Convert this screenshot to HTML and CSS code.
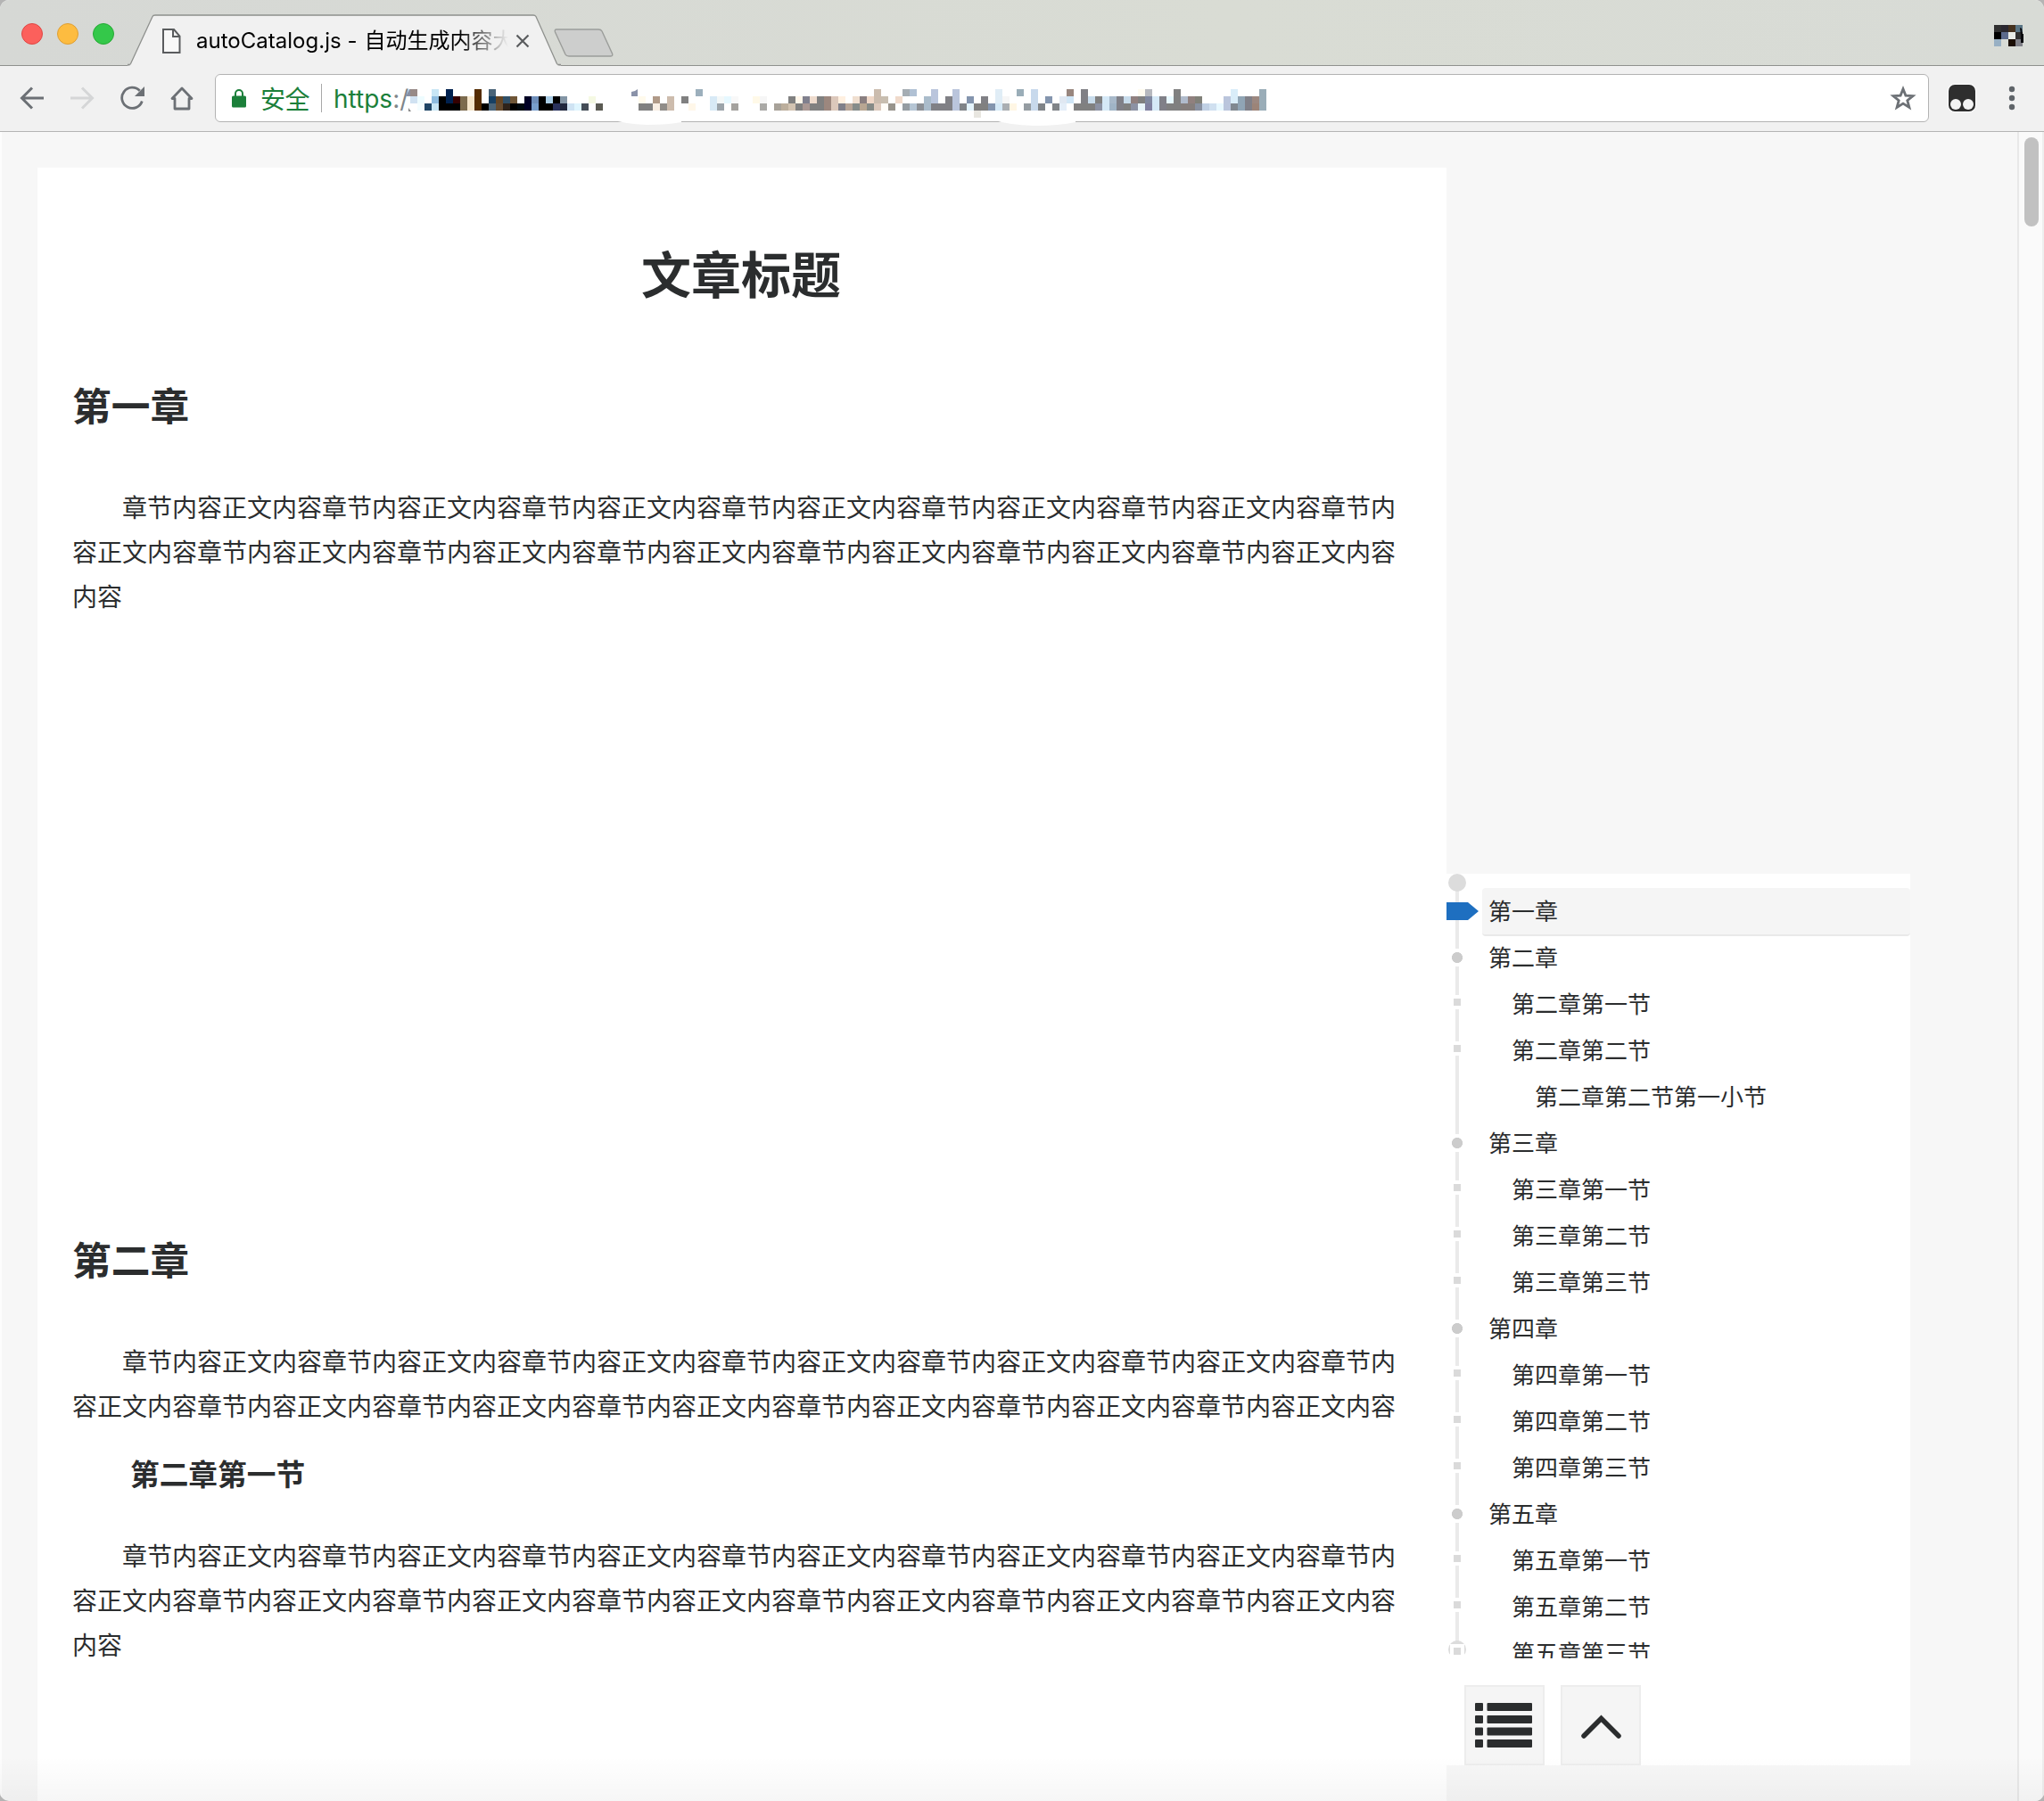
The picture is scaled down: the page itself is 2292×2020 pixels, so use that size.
FILE: index.html
```html
<!DOCTYPE html>
<html lang="zh-CN">
<head>
<meta charset="utf-8">
<title>autoCatalog.js</title>
<link rel="stylesheet" href="styles.css">
</head>
<body>
<div class="window">
  <header class="titlebar">
    <div class="lights"><i class="light red"></i><i class="light yellow"></i><i class="light green"></i></div>
    <div class="tab">
      <svg class="tab-shape" width="486" height="58" viewBox="0 0 486 58"><path d="M0 57.5H1.5Q3 57.500 3.500 56L28 3Q29 1.500 31 1.500H455Q457 1.500 458 3L481.500 56Q482 57.500 484 57.500H486V58H0Z" fill="#f1f1f1"/><path d="M0 56.500H1.500Q3 56.500 3.500 55.500L28 2.500Q28.500 1 31 1H455Q457 1 458 2.500L481.500 55.500Q482 56.500 484 56.500H486" fill="none" stroke="#8f918e" stroke-width="1.300"/></svg>
      <svg class="tab-icon" width="21" height="28" viewBox="0 0 21 28"><path d="M1 1H13L19.500 8.500V27H1ZM12 1V9H19.500" fill="#f8f8f8" stroke="#5a5c5e" stroke-width="2"/></svg>
      <span class="tab-title"><span class="latin">autoCatalog.js - </span>自动生成内容大</span>
      <svg class="tab-close" width="16" height="16" viewBox="0 0 16 16"><path d="M1.500 1.500L14.500 14.500M14.500 1.500L1.500 14.500" stroke="#5a5c5e" stroke-width="2.200"/></svg>
    </div>
    <svg class="new-tab" width="68" height="34" viewBox="0 0 68 34"><path d="M3 1H50Q53 1 54 3L65.500 28Q66.500 31 64 31H17Q14 31 13 29L1.500 4Q.5 1 3 1Z" fill="#cdcecd" stroke="#9b9d9a" stroke-width="1.400"/></svg>
    <svg class="profile" id="profile" width="33" height="24" viewBox="0 0 33 24"></svg>
  </header>

  <div class="toolbar">
    <div class="nav">
      <svg width="28" height="28" viewBox="0 0 28 28"><path d="M27 14H3M14 2.500L2.500 14L14 25.500" fill="none" stroke="#6c7075" stroke-width="3"/></svg>
      <svg width="28" height="28" viewBox="0 0 28 28"><path d="M1 14H25M14 2.500L25.500 14L14 25.500" fill="none" stroke="#d5d6d7" stroke-width="3"/></svg>
      <svg width="28" height="28" viewBox="0 0 28 28"><path d="M22.700 5.800A11.600 11.600 0 1 0 25.300 17.500" fill="none" stroke="#6c7075" stroke-width="2.800"/><path d="M28 1V12H17Z" fill="#6c7075"/></svg>
      <svg width="28" height="28" viewBox="0 0 28 28"><path d="M14 3L3 14.500H6V26H22V14.500H25Z" fill="none" stroke="#6c7075" stroke-width="2.800" stroke-linejoin="round"/></svg>
    </div>
    <div class="omnibox">
      <svg class="lock" width="18" height="22" viewBox="0 0 18 22"><path d="M5 10V6a4 4 0 0 1 8 0v4" fill="none" stroke="#1b7f3a" stroke-width="2"/><rect x="1" y="8.500" width="16" height="13" rx="1.500" fill="#1b7f3a"/></svg>
      <span class="secure">安全</span>
      <i class="divider"></i>
      <span class="scheme">https<b>:/</b></span>
      <svg class="redacted" id="redacted" width="976" height="42" viewBox="-8 0 976 42"></svg>
      <svg class="star" width="30" height="28" viewBox="0 0 30 28"><path d="M15 3.800L17.900 11.100L26 11.600L19.800 16.700L21.900 24.500L15 20.100L8.100 24.500L10.200 16.700L4 11.600L12.100 11.100Z" fill="none" stroke="#6c7075" stroke-width="2.800"/></svg>
    </div>
    <svg class="extension" width="32" height="32" viewBox="0 0 32 32"><rect width="32" height="32" rx="8" fill="#fff"/><rect x="1" y="1" width="30" height="30" rx="7" fill="#2e2e2e"/><circle cx="9" cy="23" r="6" fill="#f3f3f3"/><circle cx="23" cy="23" r="6" fill="#f3f3f3"/></svg>
    <svg class="menu" width="8" height="28" viewBox="0 0 8 28"><g fill="#5f6469"><circle cx="4" cy="4" r="3.200"/><circle cx="4" cy="14" r="3.200"/><circle cx="4" cy="24" r="3.200"/></g></svg>
  </div>

  <div class="viewport">
    <main class="article">
      <h1>文章标题</h1>
      <section class="chapter first">
        <h2>第一章</h2>
        <p>章节内容正文内容章节内容正文内容章节内容正文内容章节内容正文内容章节内容正文内容章节内容正文内容章节内容正文内容章节内容正文内容章节内容正文内容章节内容正文内容章节内容正文内容章节内容正文内容章节内容正文内容内容</p>
      </section>
      <section class="chapter">
        <h2>第二章</h2>
        <p>章节内容正文内容章节内容正文内容章节内容正文内容章节内容正文内容章节内容正文内容章节内容正文内容章节内容正文内容章节内容正文内容章节内容正文内容章节内容正文内容章节内容正文内容章节内容正文内容章节内容正文内容</p>
        <h3>第二章第一节</h3>
        <p>章节内容正文内容章节内容正文内容章节内容正文内容章节内容正文内容章节内容正文内容章节内容正文内容章节内容正文内容章节内容正文内容章节内容正文内容章节内容正文内容章节内容正文内容章节内容正文内容章节内容正文内容内容</p>
      </section>
    </main>

    <aside class="catalog">
      <div class="catalog-list">
        <div class="rail"></div>
        <ul>
          <li class="l1 active"><a>第一章</a></li>
          <li class="l1"><a>第二章</a></li>
          <li class="l2"><a>第二章第一节</a></li>
          <li class="l2"><a>第二章第二节</a></li>
          <li class="l3"><a>第二章第二节第一小节</a></li>
          <li class="l1"><a>第三章</a></li>
          <li class="l2"><a>第三章第一节</a></li>
          <li class="l2"><a>第三章第二节</a></li>
          <li class="l2"><a>第三章第三节</a></li>
          <li class="l1"><a>第四章</a></li>
          <li class="l2"><a>第四章第一节</a></li>
          <li class="l2"><a>第四章第二节</a></li>
          <li class="l2"><a>第四章第三节</a></li>
          <li class="l1"><a>第五章</a></li>
          <li class="l2"><a>第五章第一节</a></li>
          <li class="l2"><a>第五章第二节</a></li>
          <li class="l2"><a>第五章第三节</a></li>
        </ul>
      </div>
      <div class="catalog-buttons">
        <button><svg width="86" height="86" viewBox="0 0 86 86" fill="#2b2d2e"><rect x="10" y="18" width="9" height="9" rx="1"/><rect x="10" y="32" width="9" height="9" rx="1"/><rect x="10" y="45.500" width="9" height="9" rx="1"/><rect x="10" y="59" width="9" height="9" rx="1"/><rect x="23.500" y="18" width="50.500" height="9" rx="1"/><rect x="23.500" y="32" width="50.500" height="9" rx="1"/><rect x="23.500" y="45.500" width="50.500" height="9" rx="1"/><rect x="23.500" y="59" width="50.500" height="9" rx="1"/></svg></button>
        <button><svg width="86" height="86" viewBox="0 0 86 86"><path d="M24 55L43.500 35.500L63 55" fill="none" stroke="#2b2d2e" stroke-width="5.500" stroke-linecap="round"/></svg></button>
      </div>
    </aside>

    <div class="scrollbar"><i class="thumb"></i></div>
  </div>
  <div class="shade"></div>
</div>
<script src="script.js"></script>
</body>
</html>
```
FILE: styles.css
```css
*, *::before, *::after { box-sizing: border-box; }
body { margin: 0; background: #b4b4b4; font-family: "Noto Sans CJK SC", sans-serif; color: #2b2d2e; }
ul, h1, h2, h3, p { margin: 0; padding: 0; }
svg { display: block; flex: none; }
.window { position: relative; width: 2292px; height: 2020px; display: flex; flex-direction: column; overflow: hidden; border-radius: 10px; background: #f7f7f7; }

/* title bar */
.titlebar { height: 74px; display: flex; background: linear-gradient(90deg, #d6d8d5, #d9dcd4 60%, #d8dbd6); border-bottom: 1px solid #8f918e; }
.lights { display: flex; gap: 16px; padding: 26px 0 0 24px; width: 143px; }
.light { width: 24px; height: 24px; border-radius: 50%; border: 1px solid; }
.red { background: #fc605c; border-color: #df4744; }
.yellow { background: #fdbc40; border-color: #de9f34; }
.green { background: #34c84a; border-color: #27aa35; }
.tab { position: relative; width: 486px; height: 58px; margin-top: 16px; display: flex; align-items: center; padding-left: 39px; flex: none; }
.tab-shape { position: absolute; left: 0; top: 0; }
.tab-icon { position: relative; margin-top: 2px; }
.tab-title { position: relative; margin: 2px 0 0 17px; width: 350px; overflow: hidden; white-space: nowrap; font: 24px/34px Inter, "Noto Sans CJK SC", sans-serif; color: #000; -webkit-mask-image: linear-gradient(90deg, #000 295px, transparent 350px); mask-image: linear-gradient(90deg, #000 295px, transparent 350px); }
.latin { display: inline-block; width: 188.500px; white-space: pre; letter-spacing: .02px; }
.tab-close { position: relative; margin: 1px 0 0 8px; }
.new-tab { margin: 32px 0 0 -8px; }
.profile { margin: 28px 23px 0 auto; }

/* toolbar */
.toolbar { height: 74px; display: flex; align-items: center; padding-bottom: 1px; background: #f1f1f1; border-bottom: 1px solid #b4b4b4; }
.nav { display: flex; gap: 28px; width: 241px; padding-left: 22px; flex: none; }
.omnibox { width: 1922px; height: 54px; display: flex; align-items: center; background: #fff; border: 1px solid #b3b3b3; border-radius: 6px; padding-left: 17px; flex: none; }
.secure { margin-left: 15px; font-size: 28px; line-height: 40px; color: #1b7f3a; width: 58px; letter-spacing: -.4px; }
.divider { width: 1px; height: 32px; margin-left: 10px; background: #a8a8a8; }
.scheme { margin: 2px 0 0 13px; width: 78px; font: 28px/40px Inter, sans-serif; color: #1b7f3a; white-space: nowrap; }
.scheme b { font-weight: 400; color: #80868a; }
.redacted { margin-top: 22px; overflow: visible; }
.star { margin: 0 13px 0 auto; }
.extension { margin-left: 21px; }
.menu { margin-left: 36px; }

/* page */
.viewport { flex: 1; display: flex; align-items: flex-start; border-left: 2px solid #fdfdfd; overflow: hidden; }
.article { width: 1580px; height: 1900px; margin: 40px 0 0 40px; padding: 77px 41px 0 39px; background: #fff; flex: none; }
.article h1 { height: 80px; font-size: 56px; line-height: 80px; text-align: center; }
.chapter { padding-top: 75px; }
.chapter.first { height: 958px; }
.article h2 { font-size: 43.700px; line-height: 66px; margin-bottom: 57px; }
.article p { font-size: 28px; line-height: 50px; text-indent: 56px; word-break: break-all; }
.article h3 { font-size: 32.700px; line-height: 50px; margin: 26px 0 42px 65px; }

/* catalog */
.catalog { width: 520px; height: 1000px; margin-top: 832px; background: #fff; flex: none; }
.catalog-list { position: relative; height: 880px; overflow: hidden; padding: 16px 0 0 40px; }
.rail { position: absolute; left: 10px; top: 10px; width: 4px; height: 860px; background: #eaeaea; }
.rail::before, .rail::after { content: ""; position: absolute; left: -8px; width: 20px; height: 20px; border-radius: 50%; background: #dcdcdc; }
.rail::before { top: -10px; }
.rail::after { bottom: -10px; }
.catalog ul { list-style: none; }
.catalog li { position: relative; height: 52px; padding-left: 7px; font-size: 26px; line-height: 50px; }
.catalog li.l2 { padding-left: 33px; }
.catalog li.l3 { padding-left: 59px; }
.catalog li.active { height: 54px; margin-bottom: -2px; background: #f5f5f5; border-bottom: 2px solid #e9e9e9; border-radius: 4px; }
.l1::before, .l2::before { content: ""; position: absolute; border: 4px solid #fff; }
.l1::before { left: -38px; top: 16px; width: 20px; height: 20px; background: radial-gradient(circle at 50% 50%, #ccc 5.700px, #fff 6.300px); }
.l2::before { left: -36px; top: 16px; width: 16px; height: 16px; background: #dadada; }
.l1.active::before { left: -40px; top: 16px; width: 36px; height: 20px; border: 0; background: #1e6fc0; clip-path: polygon(0 0, 24px 0, 100% 50%, 24px 100%, 0 100%); }
.catalog-buttons { display: flex; gap: 18px; padding: 30px 0 0 20px; }
.catalog-buttons button { width: 90px; height: 90px; padding: 0; border: 2px solid #ededed; background: #f5f5f5; }

.scrollbar { width: 30px; height: 1872px; margin-left: auto; padding: 6px 0 0 6px; background: #fafafa; border-left: 2px solid #e8e8e8; border-right: 2px solid #eee; flex: none; }
.thumb { display: block; width: 16px; height: 100px; border-radius: 8px; background: #c1c1c1; }
.shade { position: absolute; left: 0; right: 0; bottom: 0; height: 50px; background: linear-gradient(transparent, rgba(0, 0, 0, .035)); }
```
FILE: script.js
```
// Pixelated blocks: each row lists "column color" pairs on an 8px grid.
const address = [
  "0 978a87,3 c8e6f5,5 00214f,9 542c03,11 4a6478,40 9cafbc,65 cbbcae,69 a5adb3,70 b0c1d4,73 bac5dc,76 bac5dc,82 e0edf6,85 9aadb8,87 c8d9ec,92 98867e,94 808085,102 fffbf0,103 b6b8be,107 808080,115 d9edf9,119 9aadb8",
  "0 d0e2f2,1 eefcff,3 8fbde0,4 000,5 00214f,6 350000,7 7d6b4e,8 f6e6cb,9 542c03,11 174063,12 664624,13 305068,14 6f5637,16 000024,17 6f8fba,18 000,19 aacde6,20 000,21 8395a5,25 f5f9e3,32 fffaec,34 b09a88,36 cdbcad,38 808080,42 d8eaf6,43 f4f8f8,44 e6f8ff,45 f8f8f8,48 fff9e8,49 f6f6f6,53 808080,54 fff6ea,55 80808e,56 eedbcd,57 808080,58 9c877e,59 dcc8bb,60 fff0e0,62 f0dfd0,63 8a7f80,64 f0d8c8,65 cbbcae,66 c8beb0,68 f0dacb,72 aabccb,73 bac5dc,75 808085,76 bac5dc,78 8495ae,80 808085,82 e0edf6,83 f6f6f6,87 c8d9ec,89 8495ae,91 e0e8f2,92 d0e6f6,94 808085,95 c8dcec,96 808080,97 d5e9f7,98 a8b9ca,99 808088,100 c8dcec,101 90807f,102 808080,103 8088a0,104 d5e9f7,105 808088,106 e8f8ff,107 808080,108 b0bbcc,109 90807e,110 808078,114 bac5dc,115 d9edf9,116 90a5b5,117 808088,118 9c8880,119 9aadb8",
  "1 f4fdff,2 1f4566,3 c8e6f5,4 000,5 000,6 000,7 7d6b4e,8 f6e6cb,9 542c03,10 000,11 4a6478,12 664b2e,13 2e231a,14 000,15 00090f,16 000024,17 789ecb,18 000,19 000,20 28305c,21 20283e,22 cfe3f3,23 dff5fe,24 454e57,26 5b5b53,32 808080,33 808080,34 f8eee3,35 908c88,36 cdbcad,39 fff7e9,42 d8eaf6,43 9ca4aa,45 a4a29e,49 aaa9a6,51 a8a299,52 bcae9c,53 d2c3b1,54 808080,55 aa9894,56 808080,57 808080,58 9c877e,59 dcc8bb,60 80808a,61 b8a698,62 868c8a,63 b8a692,64 868a86,65 dcc9bc,66 fffdf8,67 98948c,69 959ca2,70 b5c5d4,71 8c9096,72 aabccb,73 808085,74 808085,75 808085,76 bac5dc,77 808488,78 e4f4fc,79 808080,80 808080,81 8495ae,82 d5e9f7,83 aaaeb2,84 fff6e4,86 959ca2,87 c8d9ec,88 808488,90 808488,91 e4eef8,93 808080,94 808080,95 808080,96 8c92a4,97 d5e9f7,98 a0b4c6,99 808088,100 808080,101 8c92a4,102 e8f4fa,103 8080a0,104 d5e9f7,105 808088,106 808080,107 808080,108 857e7c,109 857e7c,110 8890a0,111 c0d0e4,112 d0e0f0,113 e8f8ff,114 bac5dc,115 808890,116 90a5b5,117 808088,118 9c8478,119 9aadb8",
  "79 e8e6e0"
];
const avatar = [
  "0 303030,1 2a2830,2 45321f,3 5a7585",
  "0 000,1 5c6a8c,2 e8ebe6,3 303030",
  "0 98b0c4,2 1a0e04,3 808088"
];

function mosaic(rows) {
  return rows.map((row, y) => row.split(",").map(cell => {
    const [x, color] = cell.split(" ");
    return `<rect x="${x * 8}" y="${y * 8}" width="8" height="8" fill="#${color}"/>`;
  }).join("")).join("");
}

document.getElementById("redacted").innerHTML =
  '<path d="M226 34H304V37Q290 40 265 40Q240 39 226 34M652 34H746V37Q728 41 700 41Q670 40 652 34" fill="#fff"/>' +
  '<path d="M-5 8L-1 0H0V8Z" fill="#8890a4"/><path d="M-2 21L1 25H-2Z" fill="#888"/>' + mosaic(address) +
  '<path d="M248 3L252 2L255 0V8H248Z" fill="#8a92a8"/>';
document.getElementById("profile").innerHTML =
  mosaic(avatar) + '<path d="M29 3L31 4L32 10H33V20H30V12Z" fill="#0a0a0e"/>';
```
